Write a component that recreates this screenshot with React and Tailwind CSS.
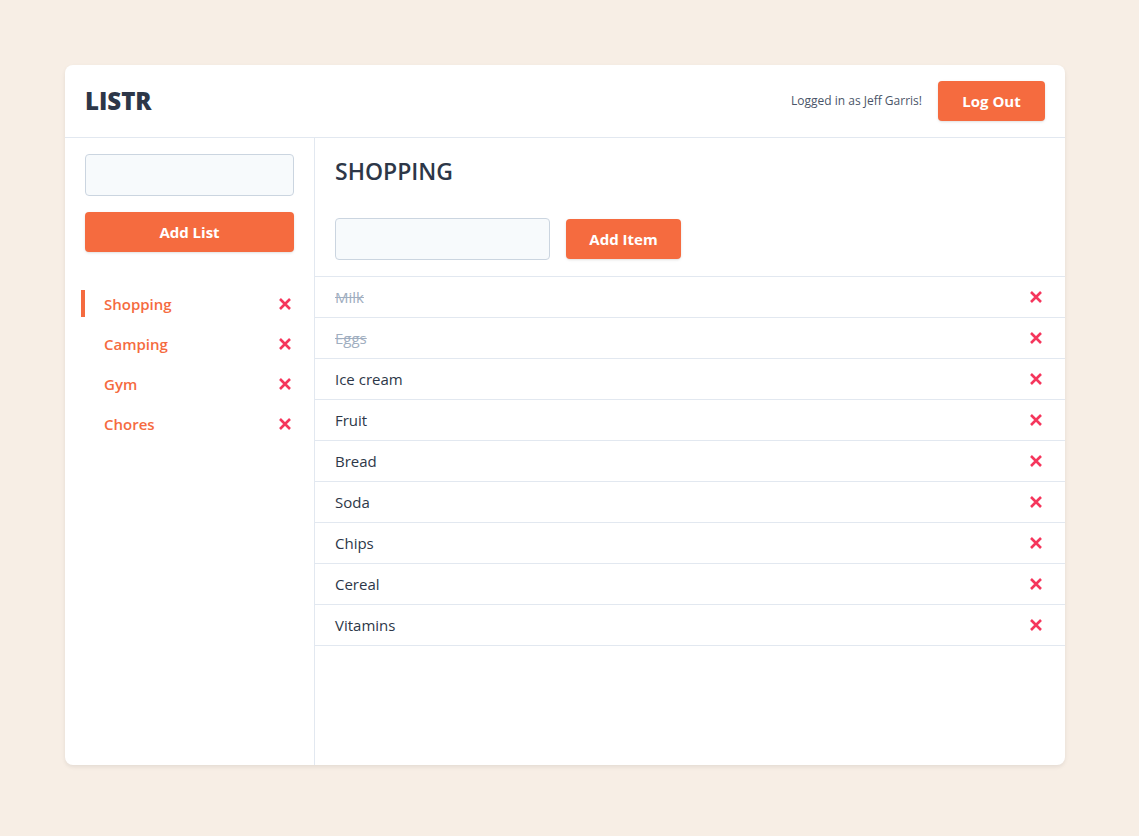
const lists = ['Shopping', 'Camping', 'Gym', 'Chores']

const items = [
  { name: 'Milk', done: true },
  { name: 'Eggs', done: true },
  { name: 'Ice cream', done: false },
  { name: 'Fruit', done: false },
  { name: 'Bread', done: false },
  { name: 'Soda', done: false },
  { name: 'Chips', done: false },
  { name: 'Cereal', done: false },
  { name: 'Vitamins', done: false },
]

function XIcon() {
  return (
    <svg width="14" height="14" viewBox="0 0 14 14" className="text-[#f5365c]">
      <path d="M2 2 L12 12 M12 2 L2 12" stroke="currentColor" strokeWidth="2.6" strokeLinecap="butt" />
    </svg>
  )
}

function App() {
  return (
    <div
      className="min-h-screen bg-[#f7eee5] pt-[65px] pl-[65px]"
      style={{ fontFamily: '"Open Sans", "Noto Sans", sans-serif' }}
    >
      <div className="w-[1000px] h-[700px] bg-white rounded-lg shadow-[0_2px_4px_rgba(0,0,0,0.08)] flex flex-col overflow-hidden">
        {/* header */}
        <div className="h-[73px] shrink-0 border-b border-[#e2e8f0] flex items-center justify-between px-5">
          <h1 className="text-[24px] font-extrabold text-[#2d3748]">LISTR</h1>
          <div className="flex items-center gap-4">
            <span className="text-xs font-medium text-[#4a5568]">Logged in as Jeff Garris!</span>
            <button className="w-[107px] h-10 rounded bg-[#f56b3f] text-white text-[15px] font-bold shadow-sm">
              Log Out
            </button>
          </div>
        </div>

        <div className="flex flex-1">
          {/* sidebar */}
          <div className="w-[250px] shrink-0 border-r border-[#e2e8f0] pt-4 px-5">
            <input className="w-full h-[42px] rounded bg-[#f7fafc] border border-[#cbd5e0]" />
            <button className="mt-4 w-full h-10 rounded bg-[#f56b3f] text-white text-[15px] font-bold shadow-sm">
              Add List
            </button>
            <div className="mt-8">
              {lists.map((l, i) => (
                <div key={l} className="h-10 flex items-center justify-between relative">
                  {i === 0 && <div className="absolute -left-1 top-[6px] w-1 h-[27px] bg-[#f56b3f]" />}
                  <span className="pl-[19px] text-[15px] font-semibold text-[#f56b3f]">{l}</span>
                  <span className="pr-[2px] flex"><XIcon /></span>
                </div>
              ))}
            </div>
          </div>

          {/* main */}
          <div className="flex-1">
            <div className="px-5 pt-[17px] pb-4">
              <h2 className="text-[23px] font-semibold text-[#2d3748] leading-8">SHOPPING</h2>
              <div className="mt-[31px] flex items-center gap-4">
                <input className="w-[215px] h-[42px] rounded bg-[#f7fafc] border border-[#cbd5e0]" />
                <button className="w-[115px] h-10 rounded bg-[#f56b3f] text-white text-[15px] font-bold shadow-sm">
                  Add Item
                </button>
              </div>
            </div>
            <div className="border-t border-[#e2e8f0]">
              {items.map((it) => (
                <div key={it.name} className="h-[41px] border-b border-[#e2e8f0] flex items-center justify-between px-5">
                  <span
                    className={
                      it.done
                        ? 'text-[15px] text-[#a0aec0] line-through'
                        : 'text-[15px] text-[#2d3748]'
                    }
                  >
                    {it.name}
                  </span>
                  <span className="pr-[2px] flex"><XIcon /></span>
                </div>
              ))}
            </div>
          </div>
        </div>
      </div>
    </div>
  )
}

export default App
